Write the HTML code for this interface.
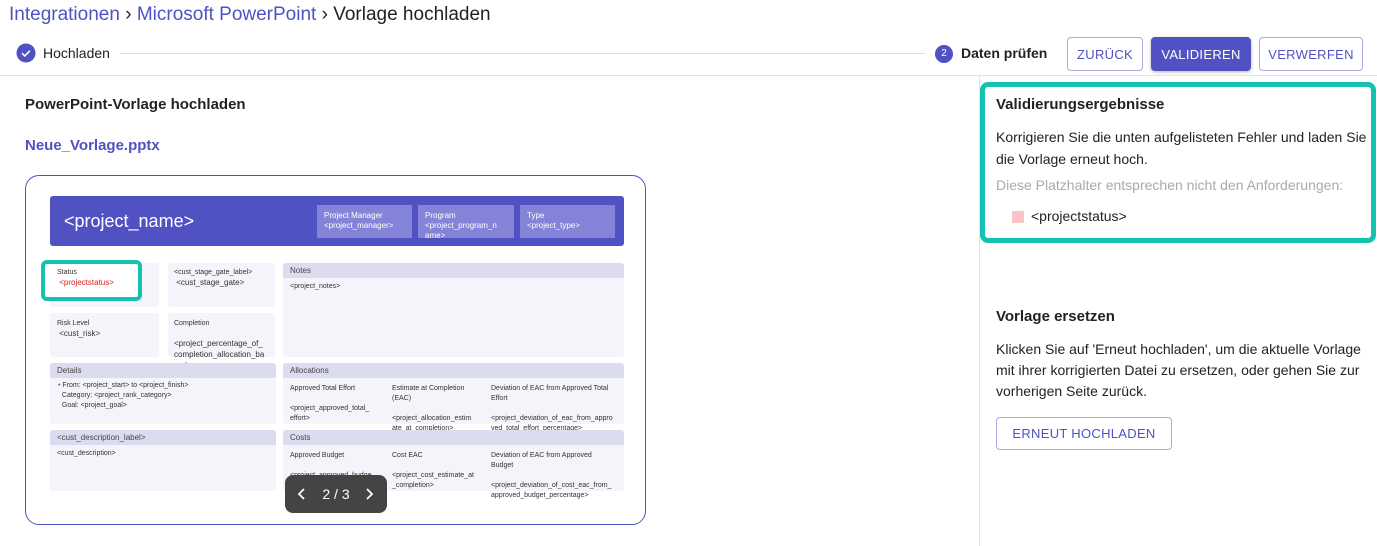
<!DOCTYPE html>
<html><head><meta charset="utf-8"><style>
*{box-sizing:border-box;margin:0;padding:0}
body{width:1377px;height:546px;overflow:hidden;background:#fff;font-family:"Liberation Sans",Arial,sans-serif;color:#222;position:relative}
.a{position:absolute;white-space:nowrap}
.p{color:#5052c4}
.btn{position:absolute;top:37px;height:34px;border:1px solid #a9aae0;border-radius:4px;color:#5052c4;font-size:13px;display:flex;align-items:center;justify-content:center;letter-spacing:.3px}
.s{font-size:7px;color:#333;position:absolute;white-space:nowrap;line-height:10px}
.box{position:absolute;background:#f4f4fa;border-radius:3px}
.hd{position:absolute;background:#dcdcf0;font-size:8px;color:#444;padding:3px 7px;border-radius:3px 3px 0 0}
</style></head><body>
<div class="a" style="left:9px;top:4px;font-size:19px"><span class="p">Integrationen</span> › <span class="p">Microsoft PowerPoint</span> › Vorlage hochladen</div>
<svg class="a" style="left:16px;top:43px" width="20" height="20"><circle cx="10" cy="10" r="9.5" fill="#5052c4"/><path d="M6 10.2l2.8 2.8 5-5.2" stroke="#fff" stroke-width="1.6" fill="none"/></svg>
<div class="a" style="left:43px;top:45px;font-size:14px">Hochladen</div>
<div class="a" style="left:120px;top:53px;width:805px;height:1px;background:#e0e0e0"></div>
<div class="a" style="left:935px;top:45px;width:18px;height:18px;border-radius:50%;background:#5052c4;color:#fff;font-size:10px;text-align:center;line-height:18px">2</div>
<div class="a" style="left:961px;top:45px;font-size:14px;font-weight:bold">Daten prüfen</div>
<div class="btn" style="left:1067px;width:76px">ZURÜCK</div>
<div class="btn" style="left:1151px;width:100px;background:#5052c4;color:#fff;border-color:#5052c4;box-shadow:0 1px 3px rgba(0,0,0,.3)">VALIDIEREN</div>
<div class="btn" style="left:1259px;width:104px">VERWERFEN</div>
<div class="a" style="left:0;top:75px;width:1377px;height:1px;background:#e4e4e4"></div>
<div class="a" style="left:979px;top:76px;width:1px;height:470px;background:#e4e4e4"></div>

<div class="a" style="left:25px;top:96px;font-size:15px;font-weight:bold">PowerPoint-Vorlage hochladen</div>
<div class="a p" style="left:25px;top:137px;font-size:15px;font-weight:bold">Neue_Vorlage.pptx</div>

<div class="a" style="left:25px;top:175px;width:621px;height:350px;border:1px solid #5052c4;border-radius:14px;overflow:hidden">
 <div class="a" style="left:24px;top:20px;width:574px;height:50px;background:#5052c4;border-radius:3px"></div>
 <div class="a" style="left:38px;top:35px;font-size:18px;color:#fff">&lt;project_name&gt;</div>
 <div class="a" style="left:291px;top:29px;width:95px;height:33px;background:#8384d8"></div>
 <div class="s" style="left:298px;top:35px;color:#fff;font-size:8px">Project Manager<br>&lt;project_manager&gt;</div>
 <div class="a" style="left:392px;top:29px;width:96px;height:33px;background:#8384d8"></div>
 <div class="s" style="left:399px;top:35px;color:#fff;font-size:8px">Program<br>&lt;project_program_n<br>ame&gt;</div>
 <div class="a" style="left:494px;top:29px;width:95px;height:33px;background:#8384d8"></div>
 <div class="s" style="left:501px;top:35px;color:#fff;font-size:8px">Type<br>&lt;project_type&gt;</div>

 <div class="box" style="left:24px;top:87px;width:109px;height:44px"></div>
 <div class="a" style="left:15px;top:84px;width:101px;height:41px;border:4px solid #13c2b0;border-radius:6px;background:#fff"></div>
 <div class="s" style="left:31px;top:92px">Status<br><span style="color:#e02020;font-size:8px">&nbsp;&lt;projectstatus&gt;</span></div>
 <div class="box" style="left:142px;top:87px;width:107px;height:44px"></div>
 <div class="s" style="left:148px;top:92px">&lt;cust_stage_gate_label&gt;<br><span style="font-size:8px">&nbsp;&lt;cust_stage_gate&gt;</span></div>
 <div class="box" style="left:24px;top:137px;width:109px;height:44px"></div>
 <div class="s" style="left:31px;top:143px">Risk Level<br><span style="font-size:8px">&nbsp;&lt;cust_risk&gt;</span></div>
 <div class="box" style="left:142px;top:137px;width:107px;height:44px"></div>
 <div class="s" style="left:148px;top:143px">Completion<br><br><span style="font-size:8px">&lt;project_percentage_of_<br>completion_allocation_ba<br>sed&gt;</span></div>
 <div class="box" style="left:257px;top:87px;width:341px;height:94px"></div>
 <div class="hd" style="left:257px;top:87px;width:341px">Notes</div>
 <div class="s" style="left:264px;top:106px">&lt;project_notes&gt;</div>

 <div class="box" style="left:24px;top:187px;width:226px;height:61px"></div>
 <div class="hd" style="left:24px;top:187px;width:226px">Details</div>
 <div class="s" style="left:32px;top:205px"><span style="color:#5052c4">•</span> From: &lt;project_start&gt; to &lt;project_finish&gt;<br>&nbsp; Category: &lt;project_rank_category&gt;<br>&nbsp; Goal: &lt;project_goal&gt;</div>
 <div class="box" style="left:257px;top:187px;width:341px;height:61px"></div>
 <div class="hd" style="left:257px;top:187px;width:341px">Allocations</div>
 <div class="s" style="left:264px;top:208px">Approved Total Effort<br><br>&lt;project_approved_total_<br>effort&gt;</div>
 <div class="s" style="left:366px;top:208px">Estimate at Completion<br>(EAC)<br><br>&lt;project_allocation_estim<br>ate_at_completion&gt;</div>
 <div class="s" style="left:465px;top:208px">Deviation of EAC from Approved Total<br>Effort<br><br>&lt;project_deviation_of_eac_from_appro<br>ved_total_effort_percentage&gt;</div>

 <div class="box" style="left:24px;top:254px;width:226px;height:61px"></div>
 <div class="hd" style="left:24px;top:254px;width:226px">&lt;cust_description_label&gt;</div>
 <div class="s" style="left:31px;top:273px">&lt;cust_description&gt;</div>
 <div class="box" style="left:257px;top:254px;width:341px;height:61px"></div>
 <div class="hd" style="left:257px;top:254px;width:341px">Costs</div>
 <div class="s" style="left:264px;top:275px">Approved Budget<br><br>&lt;project_approved_budge<br>t&gt;</div>
 <div class="s" style="left:366px;top:275px">Cost EAC<br><br>&lt;project_cost_estimate_at<br>_completion&gt;</div>
 <div class="s" style="left:465px;top:275px">Deviation of EAC from Approved<br>Budget<br><br>&lt;project_deviation_of_cost_eac_from_<br>approved_budget_percentage&gt;</div>

 <div class="a" style="left:259px;top:299px;width:102px;height:38px;background:#444;border-radius:8px;color:#fff;font-size:14px;text-align:center;line-height:38px">2 / 3</div>
 <svg class="a" style="left:271px;top:311px" width="10" height="14"><path d="M7 2L2 7l5 5" stroke="#fff" stroke-width="1.8" fill="none"/></svg>
 <svg class="a" style="left:338px;top:311px" width="10" height="14"><path d="M3 2l5 5-5 5" stroke="#fff" stroke-width="1.8" fill="none"/></svg>
</div>

<div class="a" style="left:980px;top:82px;width:396px;height:161px;border:5px solid #13c2b0;border-radius:8px"></div>
<div class="a" style="left:996px;top:96px;font-size:15px;font-weight:bold">Validierungsergebnisse</div>
<div class="a" style="left:996px;top:126px;font-size:14px;line-height:22px">Korrigieren Sie die unten aufgelisteten Fehler und laden Sie<br>die Vorlage erneut hoch.</div>
<div class="a" style="left:996px;top:177px;font-size:14px;color:#aaa">Diese Platzhalter entsprechen nicht den Anforderungen:</div>
<div class="a" style="left:1012px;top:211px;width:12px;height:12px;background:#fbc4c6"></div>
<div class="a" style="left:1031px;top:208px;font-size:14px">&lt;projectstatus&gt;</div>

<div class="a" style="left:996px;top:308px;font-size:15px;font-weight:bold">Vorlage ersetzen</div>
<div class="a" style="left:996px;top:339px;font-size:14px;line-height:21px">Klicken Sie auf 'Erneut hochladen', um die aktuelle Vorlage<br>mit ihrer korrigierten Datei zu ersetzen, oder gehen Sie zur<br>vorherigen Seite zurück.</div>
<div class="btn" style="left:996px;top:417px;width:176px;height:33px">ERNEUT HOCHLADEN</div>
</body></html>
